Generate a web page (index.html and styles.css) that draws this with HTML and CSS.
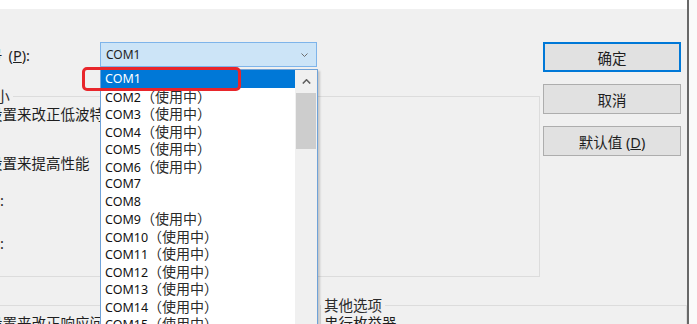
FILE: index.html
```html
<!DOCTYPE html>
<html lang="zh-CN">
<head>
  <meta charset="UTF-8">
  <meta name="viewport" content="width=device-width, initial-scale=1.0">
  <title>COM 端口高级设置</title>
  <link rel="stylesheet" href="styles.css">
</head>
<body>

  <div class="screen">
    <div class="dialog">
      <div class="titlebar"></div>

      <div class="main">
        <!-- Left side: port selector and transfer size group -->
        <div class="form">
          <div class="port-row">
            <label class="port-label"><span><span class="port-name">COM 端口号</span>(<u>P</u>):</span></label>
            <div class="combo">
              <span>COM1</span>
              <svg class="chevron" width="7" height="4" viewBox="0 0 7 4"><path d="M0.5 0.5 L3.5 3.5 L6.5 0.5" fill="none" stroke="#6d6d6d" stroke-width="1"/></svg>
            </div>
          </div>

          <fieldset class="group size">
            <legend>USB 传输大小</legend>
            <p class="hint">选择较低设置来改正低波特率时的性能问题</p>
            <p class="hint second">选择较高设置来提高性能</p>
            <div class="field first"><span>接收 (字节):</span></div>
            <div class="field"><span>发送 (字节):</span></div>
          </fieldset>
        </div>

        <!-- Right side: dialog buttons -->
        <div class="buttons">
          <button class="btn default">确定</button>
          <button class="btn">取消</button>
          <button class="btn">默认值 (<u>D</u>)</button>
        </div>
      </div>

      <div class="lower">
        <fieldset class="group bm">
          <legend>BM 选项</legend>
          <p class="hint">选择较低设置来改正响应问题</p>
        </fieldset>
        <fieldset class="group other">
          <legend>其他选项</legend>
          <p class="plain">串行枚举器</p>
        </fieldset>
      </div>

      <!-- Open dropdown list of the combo box -->
      <div class="dropdown">
        <ul class="options">
          <li class="active">COM1</li>
          <li>COM2<span class="busy">（使用中）</span></li>
          <li>COM3<span class="busy">（使用中）</span></li>
          <li>COM4<span class="busy">（使用中）</span></li>
          <li>COM5<span class="busy">（使用中）</span></li>
          <li>COM6<span class="busy">（使用中）</span></li>
          <li>COM7</li>
          <li>COM8</li>
          <li>COM9<span class="busy">（使用中）</span></li>
          <li>COM10<span class="busy">（使用中）</span></li>
          <li>COM11<span class="busy">（使用中）</span></li>
          <li>COM12<span class="busy">（使用中）</span></li>
          <li>COM13<span class="busy">（使用中）</span></li>
          <li>COM14<span class="busy">（使用中）</span></li>
          <li>COM15<span class="busy">（使用中）</span></li>
          <li>COM16<span class="busy">（使用中）</span></li>
        </ul>
        <div class="scrollbar">
          <div class="scroll-up">
            <svg width="9" height="5" viewBox="0 0 9 5"><path d="M0.8 4.5 L4.5 0.8 L8.2 4.5" fill="none" stroke="#606060" stroke-width="1.6"/></svg>
          </div>
          <div class="thumb"></div>
        </div>
      </div>

      <!-- Red annotation around the selected item -->
      <div class="mark"></div>
    </div>
    <div class="frame-edge"></div>
    <div class="outside"></div>
  </div>

</body>
</html>
```

FILE: styles.css
```css
body {
  margin: 0;
  font-family: "Noto Sans", "Noto Sans CJK SC", sans-serif;
  color: #1e1e1e;
  background-color: #fafafa;
}
.screen {
  display: flex;
  width: 697px;
  height: 324px;
  overflow: hidden;
}
.dialog {
  position: relative;
  width: 687px;
  height: 324px;
  background-color: #f0f0f0;
  overflow: hidden;
  font-size: 14.5px;
}
.titlebar {
  height: 9px;
  background-color: #ffffff;
}
.frame-edge {
  width: 2px;
  background-color: #686868;
}
.outside {
  flex: 1;
  background-color: #fafafa;
}
.main {
  display: flex;
}
.form {
  width: 540px;
  padding-top: 33px;
}
.port-row {
  display: flex;
  align-items: center;
  height: 25px;
}
.port-label {
  width: 30px;
  min-width: 0;
  flex-shrink: 0;
  margin-right: 70px;
  display: flex;
  justify-content: flex-end;
  white-space: nowrap;
}
.port-label > span {
  flex-shrink: 0;
}
.port-name {
  margin-right: 6px;
}
.combo {
  box-sizing: border-box;
  width: 217px;
  height: 25px;
  display: flex;
  align-items: center;
  padding-left: 5px;
  font-size: 12px;
  background-color: #cce4f7;
  border: 1px solid #7eb4ea;
}
.chevron {
  margin-left: auto;
  margin-right: 8px;
}
.group {
  margin: 0;
  padding: 0;
  border: 1px solid #dcdcdc;
  min-inline-size: auto;
}
.group legend {
  padding: 0 3px;
  line-height: 18px;
  white-space: nowrap;
  color: #2b2b2b;
}
.size {
  margin-top: 20px;
  margin-left: -30px;
  padding-bottom: 24px;
}
.size legend {
  margin-left: -54px;
}
.hint {
  margin: 0 0 0 -41px;
  line-height: 18px;
  white-space: nowrap;
}
.hint.second {
  margin-top: 31px;
}
.field {
  width: 4px;
  height: 18px;
  line-height: 18px;
  display: flex;
  justify-content: flex-end;
  white-space: nowrap;
  margin-left: 29px;
  margin-top: 25px;
}
.field span {
  flex-shrink: 0;
}
.field.first {
  margin-top: 19px;
}
.buttons {
  display: flex;
  flex-direction: column;
  gap: 12px;
  width: 138px;
  margin-top: 33px;
  margin-left: 3px;
}
.btn {
  box-sizing: border-box;
  height: 30px;
  font-family: inherit;
  font-size: 14.5px;
  color: #1e1e1e;
  background-color: #e1e1e1;
  border: 1px solid #adadad;
  padding: 0;
}
.btn.default {
  border: 2px solid #0078d7;
}
.lower {
  display: flex;
  margin-top: 19px;
}
.bm {
  width: 346px;
  margin-left: -30px;
}
.bm legend {
  margin-left: 160px;
}
.other {
  width: 365px;
  margin-left: 2px;
}
.other legend {
  margin-left: 0;
}
.plain {
  margin: 0 0 0 3px;
  line-height: 18px;
}
.dropdown {
  position: absolute;
  left: 100px;
  top: 69px;
  width: 218px;
  height: 270px;
  box-sizing: border-box;
  display: flex;
  background-color: #ffffff;
  border: 1px solid #6fa2d8;
  box-shadow: 2px 2px 2px rgba(0, 0, 0, 0.18);
}
.options {
  flex: 1;
  list-style: none;
  margin: 0;
  padding: 0;
  font-size: 12.5px;
  color: #111;
}
.options li {
  height: 17.5px;
  line-height: 17.5px;
  padding-left: 4px;
  white-space: nowrap;
}
.options .busy {
  font-size: 14px;
  color: #2a2a2a;
}
.options li.active {
  background-color: #0078d7;
  color: #ffffff;
}
.scrollbar {
  width: 22px;
  background-color: #f0f0f0;
}
.scroll-up {
  height: 23px;
  display: flex;
  align-items: center;
  justify-content: center;
}
.thumb {
  height: 56px;
  margin: 0 1px;
  background-color: #cdcdcd;
}
.mark {
  position: absolute;
  left: 82px;
  top: 67px;
  width: 159px;
  height: 24px;
  box-sizing: border-box;
  border: 3px solid #e8262b;
  border-radius: 5px;
}
```
